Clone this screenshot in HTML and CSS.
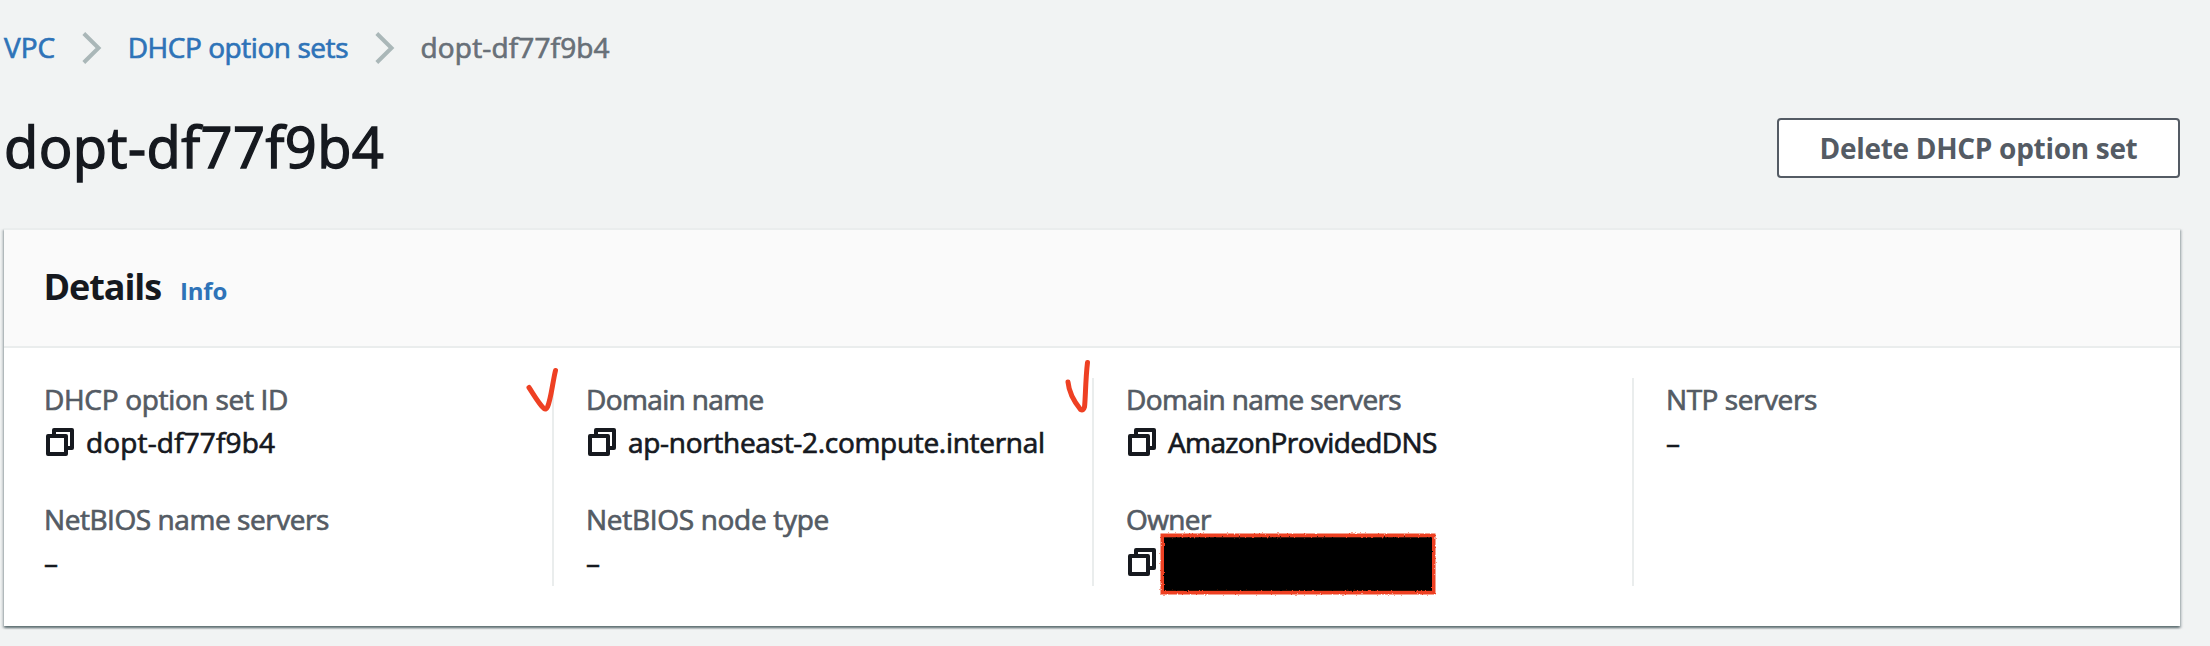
FILE: index.html
```
<!DOCTYPE html>
<html lang="en">
<head>
<meta charset="utf-8">
<title>dopt-df77f9b4 | DHCP option sets</title>
<link rel="stylesheet" href="styles.css">
</head>
<body>
<svg class="defs" aria-hidden="true">
  <symbol id="copy" viewBox="0 0 28 28"><path d="M8 8V2h18v18h-6M2 8h18v18H2z" fill="none" stroke="currentColor" stroke-width="4" stroke-linejoin="round"/></symbol>
  <symbol id="chevron" viewBox="0 0 20 32"><path d="M1.800 1.500 16.500 16 1.800 30.500" fill="none" stroke="currentColor" stroke-width="4"/></symbol>
</svg>
<nav class="breadcrumbs">
  <a class="crumb" href="#">VPC</a>
  <svg class="chevron"><use href="#chevron"/></svg>
  <a class="crumb close" href="#">DHCP option sets</a>
  <svg class="chevron"><use href="#chevron"/></svg>
  <span class="crumb current">dopt-df77f9b4</span>
</nav>
<header class="page-header">
  <h1 class="title">dopt-df77f9b4</h1>
  <button class="button">Delete DHCP option set</button>
</header>
<section class="panel">
  <div class="panel-header">
    <h2 class="panel-title">Details</h2>
    <a class="info" href="#">Info</a>
  </div>
  <div class="columns">
    <div class="column">
      <div class="field">
        <div class="label snug">DHCP option set ID</div>
        <div class="value loose"><svg class="copy"><use href="#copy"/></svg>dopt-df77f9b4</div>
      </div>
      <div class="field">
        <div class="label close">NetBIOS name servers</div>
        <div class="value">–</div>
      </div>
      <svg class="mark mark-first" viewBox="0 0 40 50"><path d="M9 12.500C14 20 19 29 24 33.500Q26 35 27.500 32C31 24 32.500 8 35.500-4.500"/></svg>
    </div>
    <div class="column">
      <div class="field">
        <div class="label tight">Domain name</div>
        <div class="value snug"><svg class="copy"><use href="#copy"/></svg>ap-northeast-2.compute.internal</div>
      </div>
      <div class="field">
        <div class="label snug">NetBIOS node type</div>
        <div class="value">–</div>
      </div>
      <svg class="mark mark-second" viewBox="0 0 40 50"><path d="M8 7C9 18 14.500 27 20.500 34.500Q23.500 36 24.500 32C25.500 24 25.500 4 27.500-12.500"/></svg>
    </div>
    <div class="column">
      <div class="field">
        <div class="label tight">Domain name servers</div>
        <div class="value tight"><svg class="copy"><use href="#copy"/></svg>AmazonProvidedDNS</div>
      </div>
      <div class="field owner">
        <div class="label tight">Owner</div>
        <div class="value"><svg class="copy"><use href="#copy"/></svg></div>
        <svg class="redaction" viewBox="0 0 278 64">
          <filter id="rough" x="-5%" y="-10%" width="110%" height="120%">
            <feTurbulence type="fractalNoise" baseFrequency=".6" numOctaves="2" seed="4"/>
            <feDisplacementMap in="SourceGraphic" scale="2.500" xChannelSelector="R" yChannelSelector="G"/>
          </filter>
          <g filter="url(#rough)">
            <rect x="1.500" y="1.500" width="275" height="61" fill="#ee4023"/>
            <rect x="5" y="5.300" width="268" height="53.500" fill="#000"/>
          </g>
        </svg>
      </div>
    </div>
    <div class="column">
      <div class="field">
        <div class="label close">NTP servers</div>
        <div class="value">–</div>
      </div>
    </div>
  </div>
</section>
</body>
</html>
```
FILE: styles.css
```
* { box-sizing: border-box; }
body {
  margin: 0;
  height: 646px;
  padding: 25px 30px 0 4px;
  overflow: hidden;
  background: #f1f3f3;
  color: #16191f;
  font: 400 28px/44px "Open Sans", "Noto Sans", sans-serif;
  -webkit-text-stroke: .7px currentColor;
}
a { color: #2e73b8; text-decoration: none; }
.defs { position: absolute; width: 0; height: 0; }
.snug { letter-spacing: -.3px; }
.close { letter-spacing: -.44px; }
.tight { letter-spacing: -.62px; }
.loose { letter-spacing: .15px; }
.breadcrumbs { display: flex; height: 44px; }
.chevron { flex: none; width: 20px; height: 32px; margin: 7px 25.500px 0 27px; color: #aab7b8; }
.current { color: #687078; letter-spacing: .15px; }
.page-header {
  display: flex;
  justify-content: space-between;
  margin-top: 41px;
  height: 118px;
}
.title {
  margin: 0;
  font-size: 56px;
  font-weight: 400;
  line-height: 72px;
  letter-spacing: .45px;
  -webkit-text-stroke-width: 1.400px;
}
.button {
  width: 403px;
  height: 60px;
  margin: 8px 0 0;
  padding: 0;
  border: 2px solid #545b64;
  border-radius: 4px;
  background: #fff;
  color: #545b64;
  font: 700 28px/54px "Open Sans", sans-serif;
  letter-spacing: -.3px;
  -webkit-text-stroke-width: 0;
}
.panel {
  height: 398px;
  border-top: 2px solid #eaeded;
  background: #fff;
  box-shadow: 0 2px 2px rgba(0, 28, 36, .45), 2px 2px 2px rgba(0, 28, 36, .15), -2px 2px 2px rgba(0, 28, 36, .15);
}
.panel-header {
  display: flex;
  align-items: baseline;
  height: 118px;
  padding: 35px 39.500px 0;
  gap: 19px;
  border-bottom: 2px solid #eaeded;
  background: #fafafa;
  -webkit-text-stroke-width: 0;
}
.panel-title {
  margin: 0;
  font-size: 36px;
  font-weight: 700;
  letter-spacing: -1.100px;
}
.info { font-size: 24px; font-weight: 700; letter-spacing: -.2px; }
.columns {
  display: grid;
  grid-template-columns: 550px 540px 540px 1fr;
  padding-top: 30px;
}
.column {
  position: relative;
  display: flex;
  flex-direction: column;
  gap: 34px;
  height: 208px;
  padding-left: 32px;
  border-right: 2px solid #eaeded;
}
.column:first-child { padding-left: 40px; }
.column:last-child { border-right: 0; }
.label { height: 42px; line-height: 42px; color: #545b64; }
.value { display: flex; align-items: center; height: 44px; white-space: nowrap; }
.copy { width: 28px; height: 28px; margin: 0 12px 0 2px; flex: none; }
.mark {
  position: absolute;
  width: 40px;
  height: 50px;
  overflow: visible;
  fill: none;
  stroke: #ee4023;
  stroke-width: 5px;
  stroke-linecap: round;
  stroke-linejoin: round;
}
.mark-first { left: 516px; top: -3px; }
.mark-second { left: 506px; top: -3px; }
.owner { position: relative; }
.redaction { position: absolute; left: 33px; top: 34px; width: 278px; height: 64px; overflow: visible; }
```
